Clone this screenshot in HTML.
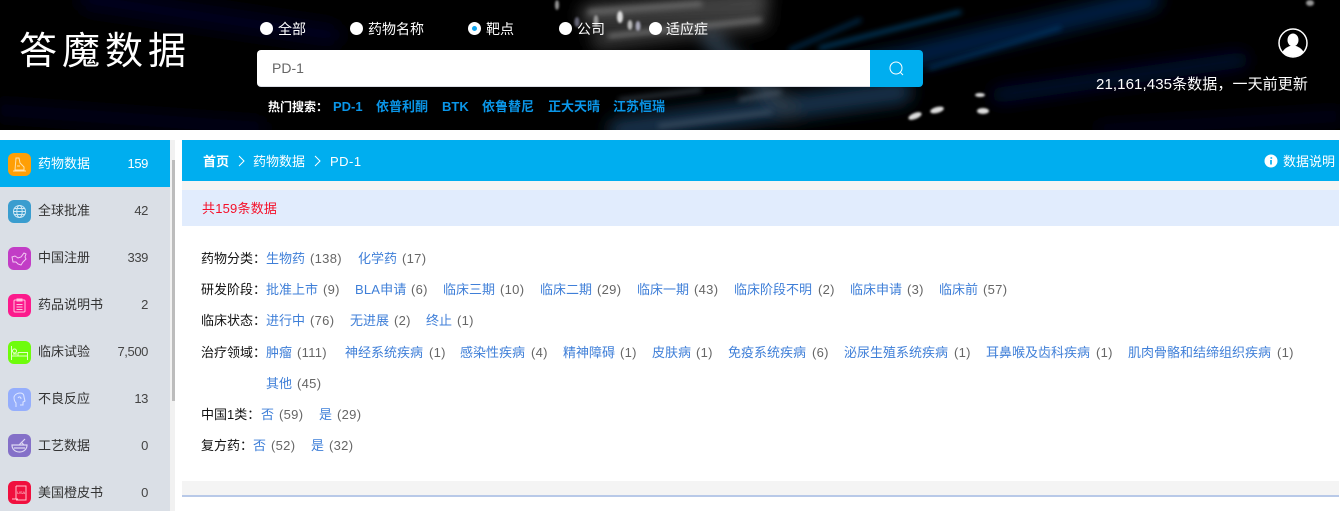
<!DOCTYPE html>
<html lang="zh"><head><meta charset="utf-8"><title>药物数据</title>
<style>
html,body{margin:0;padding:0;background:#fff}
#p{position:relative;width:1340px;height:511px;overflow:hidden;background:#fff;font:13px/20px "Liberation Sans","Noto Sans CJK SC",sans-serif;color:#333}
#p span,#p div{position:absolute;white-space:nowrap}
.r{width:13px;height:13px;border-radius:50%;background:#fff}
.w{color:#fff;font-size:14px}
.h{color:#0a96e8;font-weight:bold;top:97px}
.n{left:38px;color:#333}
.c{right:1192px;color:#444;letter-spacing:-.4px}
.i{left:8px;width:23px;height:23px;border-radius:6px;overflow:hidden}
.i svg{display:block}
.l{color:#111}
.a{color:#3f7fd8}
.m{color:#666;letter-spacing:.3px}
</style></head><body><div id="p">
<svg style="position:absolute;left:0;top:0" width="1340" height="130" viewBox="0 0 1340 130">
<defs><filter id="b"><feGaussianBlur stdDeviation="8"/></filter><filter id="s"><feGaussianBlur stdDeviation="3"/></filter><filter id="t"><feGaussianBlur stdDeviation="1"/></filter></defs>
<rect width="1340" height="130" fill="#000"/>
<g filter="url(#b)" fill="none" stroke-linecap="round">
<path d="M90 0L330 35" stroke="#04061f" stroke-width="24"/>
<path d="M0 110L260 128" stroke="#02031a" stroke-width="14"/>
<path d="M840 70L1010 30" stroke="#052a55" stroke-width="14"/>
<path d="M900 60L1150 0" stroke="#03224a" stroke-width="20"/>
<path d="M1000 95L1240 60" stroke="#020f30" stroke-width="16"/>
<path d="M620 130L900 92" stroke="#14304c" stroke-width="24"/>
<path d="M1100 130L1340 116" stroke="#020a20" stroke-width="10"/>
<path d="M590 15L760 0" stroke="#4a4a4a" stroke-width="20"/>
<path d="M600 40L760 20" stroke="#3a3a3a" stroke-width="18"/>
<path d="M710 40L790 110" stroke="#2c3a48" stroke-width="18"/>
</g>
<g filter="url(#s)" fill="none" stroke-linecap="round">
<path d="M820 48L960 12" stroke="#0e4f85" stroke-width="3"/>
<path d="M790 50L860 20" stroke="#0b3a66" stroke-width="3"/>
<path d="M930 68L1060 28" stroke="#0a3d75" stroke-width="3"/>
<path d="M610 36L760 20" stroke="#777" stroke-width="4"/>
<path d="M620 100L700 90" stroke="#3c4a55" stroke-width="3"/>
<path d="M740 100L780 92" stroke="#4c5a68" stroke-width="3"/>
<path d="M660 126L770 112" stroke="#3b4d5e" stroke-width="4"/>
<path d="M590 12L700 4" stroke="#6a6a6a" stroke-width="5"/>
</g>
<g filter="url(#t)" fill="#ddd">
<ellipse cx="557" cy="5" rx="2" ry="5" fill="#999"/>
<ellipse cx="577" cy="22" rx="2.500" ry="5" fill="#667"/>
<ellipse cx="596" cy="21" rx="2.500" ry="6" fill="#999"/>
<ellipse cx="620" cy="17" rx="3" ry="6"/>
<ellipse cx="630" cy="25" rx="2.500" ry="5" fill="#bbb"/>
<ellipse cx="638" cy="26" rx="2.500" ry="5" fill="#aab"/>
<ellipse cx="937" cy="110" rx="7" ry="3" transform="rotate(-15 937 110)"/>
<ellipse cx="915" cy="116" rx="7" ry="3" transform="rotate(-22 915 116)"/>
<ellipse cx="983" cy="111" rx="6" ry="3"/><ellipse cx="980" cy="95" rx="5" ry="2"/>
<ellipse cx="1310" cy="3" rx="4" ry="3" fill="#999"/>
</g>
</svg>
<span style="left:19px;top:26px;font-size:38px;line-height:44px;letter-spacing:5px;color:#fff;font-family:'WenQuanYi Zen Hei','Noto Sans CJK SC',sans-serif">答魔数据</span>

<div class="r" style="left:260px;top:22px"></div><span class="w" style="left:278px;top:19px">全部</span>
<div class="r" style="left:350px;top:22px"></div><span class="w" style="left:368px;top:19px">药物名称</span>
<div class="r" style="left:468px;top:22px;border:4px solid #fff;background:#0ea5f0;width:5px;height:5px"></div><span class="w" style="left:486px;top:19px">靶点</span>
<div class="r" style="left:559px;top:22px"></div><span class="w" style="left:577px;top:19px">公司</span>
<div class="r" style="left:649px;top:22px"></div><span class="w" style="left:666px;top:19px">适应症</span>

<div style="left:257px;top:50px;width:613px;height:37px;background:#fff;border-radius:4px 0 0 4px;box-sizing:border-box;border-bottom:1px solid #dcdfe6"></div>
<span style="left:272px;top:58px;color:#666;font-size:14px">PD-1</span>
<div style="left:870px;top:50px;width:53px;height:37px;background:#00aeef;border-radius:0 4px 4px 0"></div>
<svg style="position:absolute;left:888px;top:60px" width="18" height="18" viewBox="0 0 18 18" fill="none" stroke="#fff" stroke-width="1"><circle cx="8" cy="8" r="6"/><path d="M12.500 12.500L15 15"/></svg>

<span style="left:268px;top:97px;color:#fff;font-weight:bold;font-size:12px">热门搜索：</span>
<span class="h" style="left:333px">PD-1</span><span class="h" style="left:376px">依普利酮</span><span class="h" style="left:442px">BTK</span><span class="h" style="left:482px">依鲁替尼</span><span class="h" style="left:548px">正大天晴</span><span class="h" style="left:613px">江苏恒瑞</span>

<svg style="position:absolute;left:1278px;top:28px" width="30" height="30" viewBox="0 0 30 30"><defs><clipPath id="u"><circle cx="15" cy="15" r="13.500"/></clipPath></defs><circle cx="15" cy="15" r="14" fill="#000" stroke="#fff" stroke-width="1.500"/><g clip-path="url(#u)" fill="#fff"><ellipse cx="15" cy="12" rx="5.500" ry="6.500"/><path d="M3 30C3 22 9 19 12 18L18 18C21 19 27 22 27 30Z"/></g></svg>
<span style="left:1096px;top:75px;color:#fff;font-size:15px;letter-spacing:.1px">21,161,435条数据，一天前更新</span>

<div style="left:0;top:140px;width:170px;height:371px;background:#dadfe6"></div>
<div style="left:0;top:140px;width:170px;height:47px;background:#00aeef"></div>
<div style="left:170px;top:140px;width:5px;height:371px;background:#f1f1f1"></div>
<div style="left:172px;top:160px;width:3px;height:241px;background:#bcbcbc"></div>

<div class="i" style="top:153px;background:#ff9f05"><svg width="23" height="23" fill="none" stroke="#ffe2ac" stroke-width="1"><path d="M8 5h3l1 5 4 4v3H7zM5 18h13M9 13h3"/></svg></div>
<span class="n" style="top:154px;color:#fff">药物数据</span><span class="c" style="top:154px;color:#fff">159</span>
<div class="i" style="top:200px;background:#3a9dcf"><svg width="23" height="23" fill="none" stroke="#cfe8f5" stroke-width="1"><circle cx="11.500" cy="11.500" r="6"/><ellipse cx="11.500" cy="11.500" rx="2.700" ry="6"/><path d="M5.500 11.500h12M6.500 8.500h10M6.500 14.500h10"/></svg></div>
<span class="n" style="top:201px">全球批准</span><span class="c" style="top:201px">42</span>
<div class="i" style="top:247px;background:#c23dc6"><svg width="23" height="23" fill="none" stroke="#f3c9f3" stroke-width="1"><path d="M4 10l3-1 3 2 3-1 3-4 2 1-1 3 1 2-3 3-2 3-3-1-2-2-3 0z"/></svg></div>
<span class="n" style="top:248px">中国注册</span><span class="c" style="top:248px">339</span>
<div class="i" style="top:294px;background:#fc1a8c"><svg width="23" height="23" fill="none" stroke="#ffc4df" stroke-width="1"><rect x="6" y="6" width="11" height="12" rx="1"/><path d="M9 5h5v2H9zM8.500 10.500h6M8.500 13h6M8.500 15.500h6"/></svg></div>
<span class="n" style="top:295px">药品说明书</span><span class="c" style="top:295px">2</span>
<div class="i" style="top:341px;background:#6efc0b"><svg width="23" height="23" fill="none" stroke="#e3ffc7" stroke-width="1"><path d="M3.500 5v14M3.500 15h16M19.500 11v8M10 11.500h9.500M10 11.500v3.500"/><circle cx="6.500" cy="10" r="2"/><path d="M5 13h4"/></svg></div>
<span class="n" style="top:342px">临床试验</span><span class="c" style="top:342px">7,500</span>
<div class="i" style="top:388px;background:#95aefc"><svg width="23" height="23" fill="none" stroke="#dfe7ff" stroke-width="1"><path d="M8 19v-4c-2-2-2-4-2-6 1-3 4-4 6-4 3 0 4 2 4 4l1 4-2 1v3h-3"/><path d="M10 10c1-2 3-1 3 1"/></svg></div>
<span class="n" style="top:389px">不良反应</span><span class="c" style="top:389px">13</span>
<div class="i" style="top:434px;background:#8470c8"><svg width="23" height="23" fill="none" stroke="#ded8f3" stroke-width="1.200"><path d="M4 11h15c0 4-3 7-7.500 7S4 15 4 11zM11 11l6-6M6 14h11M13 8l3 3"/></svg></div>
<span class="n" style="top:436px">工艺数据</span><span class="c" style="top:436px">0</span>
<div class="i" style="top:481px;background:#f00f3e"><svg width="23" height="23" fill="none" stroke="#ffc2cf" stroke-width="1"><path d="M8 5h10v14H8M8 5v13M4 18h6"/><text x="9" y="13" font-size="4" fill="#ffd5de" stroke="none" font-family="Liberation Sans">USA</text></svg></div>
<span class="n" style="top:483px">美国橙皮书</span><span class="c" style="top:483px">0</span>

<div style="left:182px;top:140px;width:1157px;height:41px;background:#00aeef"></div>
<span style="left:203px;top:152px;color:#fff;font-weight:bold">首页</span>
<svg style="position:absolute;left:237px;top:155px" width="9" height="12" fill="none" stroke="#fff"><path d="M2 1l5 5-5 5"/></svg>
<span style="left:253px;top:152px;color:#fff">药物数据</span>
<svg style="position:absolute;left:313px;top:155px" width="9" height="12" fill="none" stroke="#fff"><path d="M2 1l5 5-5 5"/></svg>
<span style="left:330px;top:152px;color:#fff;letter-spacing:.5px">PD-1</span>
<svg style="position:absolute;left:1264px;top:154px" width="14" height="14"><circle cx="7" cy="7" r="6.500" fill="#fff"/><path d="M7.300 3.200v1.600M7 6v4.500" stroke="#00aeef" stroke-width="1.700"/></svg>
<span style="left:1283px;top:152px;color:#fff">数据说明</span>

<div style="left:182px;top:181px;width:1157px;height:9px;background:#f4f4f4"></div>
<div style="left:182px;top:190px;width:1157px;height:36px;background:#e1ecfd"></div>
<span style="left:202px;top:199px;color:#f5102a;letter-spacing:.2px">共159条数据</span>

<span class="l" style="left:201px;top:249px">药物分类：</span><span class="a" style="left:266px;top:249px">生物药</span><span class="m" style="left:310px;top:249px">(138)</span><span class="a" style="left:358px;top:249px">化学药</span><span class="m" style="left:402px;top:249px">(17)</span>

<span class="l" style="left:201px;top:280px">研发阶段：</span><span class="a" style="left:266px;top:280px">批准上市</span><span class="m" style="left:323px;top:280px">(9)</span><span class="a" style="left:355px;top:280px;letter-spacing:.2px">BLA申请</span><span class="m" style="left:411px;top:280px">(6)</span><span class="a" style="left:443px;top:280px">临床三期</span><span class="m" style="left:500px;top:280px">(10)</span><span class="a" style="left:540px;top:280px">临床二期</span><span class="m" style="left:597px;top:280px">(29)</span><span class="a" style="left:637px;top:280px">临床一期</span><span class="m" style="left:694px;top:280px">(43)</span><span class="a" style="left:734px;top:280px">临床阶段不明</span><span class="m" style="left:818px;top:280px">(2)</span><span class="a" style="left:850px;top:280px">临床申请</span><span class="m" style="left:907px;top:280px">(3)</span><span class="a" style="left:939px;top:280px">临床前</span><span class="m" style="left:983px;top:280px">(57)</span>

<span class="l" style="left:201px;top:311px">临床状态：</span><span class="a" style="left:266px;top:311px">进行中</span><span class="m" style="left:310px;top:311px">(76)</span><span class="a" style="left:350px;top:311px">无进展</span><span class="m" style="left:394px;top:311px">(2)</span><span class="a" style="left:426px;top:311px">终止</span><span class="m" style="left:457px;top:311px">(1)</span>

<span class="l" style="left:201px;top:343px">治疗领域：</span><span class="a" style="left:266px;top:343px">肿瘤</span><span class="m" style="left:297px;top:343px">(111)</span><span class="a" style="left:345px;top:343px">神经系统疾病</span><span class="m" style="left:429px;top:343px">(1)</span><span class="a" style="left:460px;top:343px">感染性疾病</span><span class="m" style="left:531px;top:343px">(4)</span><span class="a" style="left:563px;top:343px">精神障碍</span><span class="m" style="left:620px;top:343px">(1)</span><span class="a" style="left:652px;top:343px">皮肤病</span><span class="m" style="left:696px;top:343px">(1)</span><span class="a" style="left:728px;top:343px">免疫系统疾病</span><span class="m" style="left:812px;top:343px">(6)</span><span class="a" style="left:844px;top:343px">泌尿生殖系统疾病</span><span class="m" style="left:954px;top:343px">(1)</span><span class="a" style="left:986px;top:343px">耳鼻喉及齿科疾病</span><span class="m" style="left:1096px;top:343px">(1)</span><span class="a" style="left:1128px;top:343px">肌肉骨骼和结缔组织疾病</span><span class="m" style="left:1277px;top:343px">(1)</span>

<span class="a" style="left:266px;top:374px">其他</span><span class="m" style="left:297px;top:374px">(45)</span>

<span class="l" style="left:201px;top:405px">中国1类：</span><span class="a" style="left:261px;top:405px">否</span><span class="m" style="left:279px;top:405px">(59)</span><span class="a" style="left:319px;top:405px">是</span><span class="m" style="left:337px;top:405px">(29)</span>

<span class="l" style="left:201px;top:436px">复方药：</span><span class="a" style="left:253px;top:436px">否</span><span class="m" style="left:271px;top:436px">(52)</span><span class="a" style="left:311px;top:436px">是</span><span class="m" style="left:329px;top:436px">(32)</span>

<div style="left:182px;top:481px;width:1157px;height:14px;background:#f4f4f4"></div>
<div style="left:182px;top:495px;width:1157px;height:2px;background:#b8c9e8"></div>
</div></body></html>
